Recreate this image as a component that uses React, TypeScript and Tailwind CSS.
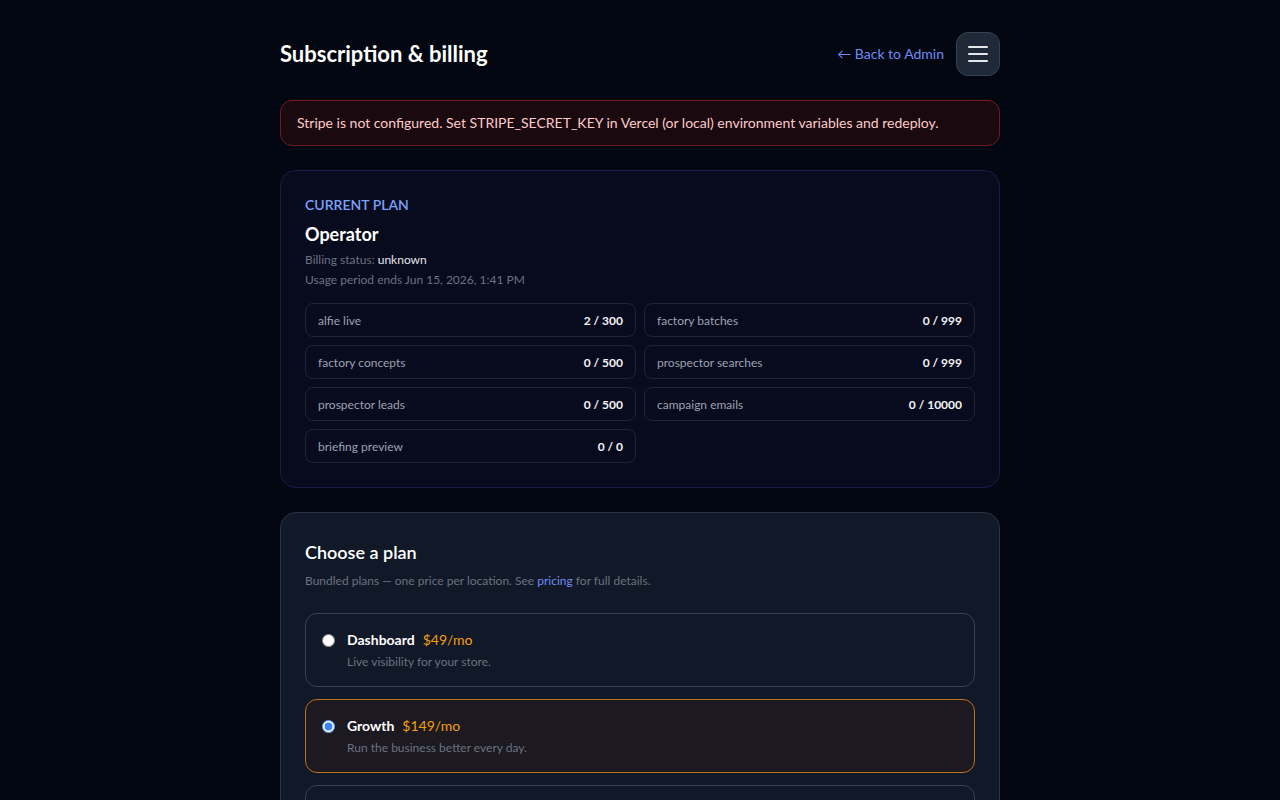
const usage = [
  { label: "alfie live", value: "2 / 300" },
  { label: "factory batches", value: "0 / 999" },
  { label: "factory concepts", value: "0 / 500" },
  { label: "prospector searches", value: "0 / 999" },
  { label: "prospector leads", value: "0 / 500" },
  { label: "campaign emails", value: "0 / 10000" },
  { label: "briefing preview", value: "0 / 0" },
];

const plans = [
  { name: "Dashboard", price: "$49/mo", desc: "Live visibility for your store.", selected: false },
  { name: "Growth", price: "$149/mo", desc: "Run the business better every day.", selected: true },
  { name: "Operator", price: "$299/mo", desc: "Everything, fully automated.", selected: false },
];

export default function App() {
  return (
    <div
      className="min-h-screen bg-[#030712] text-white"
      style={{ fontFamily: 'Lato, "Noto Sans", sans-serif' }}
    >
      <div className="mx-auto w-[720px] pt-8 pb-10">
        <div className="flex items-center justify-between">
          <h1 className="text-[22px] leading-[28px] font-bold">Subscription &amp; billing</h1>
          <div className="flex items-center gap-3">
            <a className="text-[14px] leading-5 text-[#6f8cf6]">← Back to Admin</a>
            <button className="flex h-11 w-11 flex-col items-center justify-center gap-[5px] rounded-xl border border-[#374151] bg-[#1f2937]">
              <span className="block h-[2px] w-5 rounded bg-[#e5e7eb]" />
              <span className="block h-[2px] w-5 rounded bg-[#e5e7eb]" />
              <span className="block h-[2px] w-5 rounded bg-[#e5e7eb]" />
            </button>
          </div>
        </div>

        <div className="mt-6 rounded-xl border border-[#6b1a1f] bg-[#1a0a0f] px-4 py-3 text-[14px] leading-5 text-[#fecaca]">
          Stripe is not configured. Set STRIPE_SECRET_KEY in Vercel (or local) environment variables and redeploy.
        </div>

        <div className="mt-6 rounded-2xl border border-[#1e1b4b] bg-[#080a1e] p-6">
          <div className="text-[14px] leading-5 font-semibold uppercase text-[#7ba2f5]">Current plan</div>
          <div className="mt-[5px] text-[18px] leading-7 font-bold">Operator</div>
          <div className="mt-1 text-[12px] leading-4 text-[#6b7280]">
            Billing status: <span className="text-[#e5e7eb]">unknown</span>
          </div>
          <div className="mt-1 text-[12px] leading-4 text-[#6b7280]">Usage period ends Jun 15, 2026, 1:41 PM</div>
          <div className="mt-[15px] grid grid-cols-2 gap-2">
            {usage.map((u) => (
              <div
                key={u.label}
                className="flex h-[34px] items-center justify-between rounded-lg border border-[#1f2433] px-3 pt-[1px] text-[12px]"
              >
                <span className="text-[#9ca3af]">{u.label}</span>
                <span className="font-bold text-[#f3f4f6]">{u.value}</span>
              </div>
            ))}
          </div>
        </div>

        <div className="mt-6 rounded-2xl border border-[#2b3444] bg-[#111827] p-6">
          <h2 className="mt-[1px] text-[18px] leading-7 font-semibold">Choose a plan</h2>
          <p className="mt-[7px] text-[12px] leading-4 text-[#6b7280]">
            Bundled plans — one price per location. See <span className="text-[#6f8cf6]">pricing</span> for full details.
          </p>
          <div className="mt-6 flex flex-col gap-3">
            {plans.map((p) => (
              <label
                key={p.name}
                className={
                  p.selected
                    ? "flex h-[74px] items-start gap-3 rounded-xl border border-[#b8741a] bg-[#1c1a20] px-4 pt-4"
                    : "flex h-[74px] items-start gap-3 rounded-xl border border-[#374151] px-4 pt-4"
                }
              >
                <input
                  type="radio"
                  name="plan"
                  readOnly
                  checked={p.selected}
                  className="m-0 mt-[4px] h-[13px] w-[13px] accent-[#3b82f6]"
                />
                <div>
                  <div className="flex items-baseline gap-2 text-[14px] leading-5">
                    <span className="font-bold text-white">{p.name}</span>
                    <span className="text-[#f59e0b]">{p.price}</span>
                  </div>
                  <div className="mt-1 text-[12px] leading-4 text-[#6b7280]">{p.desc}</div>
                </div>
              </label>
            ))}
          </div>
        </div>
      </div>
    </div>
  );
}
